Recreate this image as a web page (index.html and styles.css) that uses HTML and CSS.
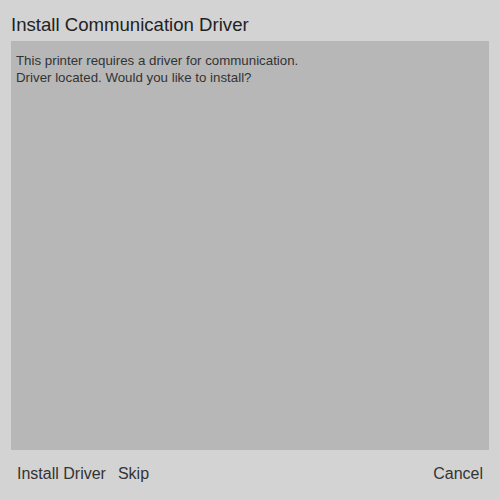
FILE: index.html
```
<!DOCTYPE html>
<html>
<head>
<meta charset="utf-8">
<link rel="stylesheet" href="styles.css">
</head>
<body>
<div class="dialog">
  <div class="title">Install Communication Driver</div>
  <div class="panel">
    <p class="msg">This printer requires a driver for communication.<br>Driver located. Would you like to install?</p>
  </div>
  <div class="actions">
    <span class="btn">Install Driver</span>
    <span class="btn">Skip</span>
    <span class="spacer"></span>
    <span class="btn">Cancel</span>
  </div>
</div>
</body>
</html>
```
FILE: styles.css
```
html, body {
  margin: 0;
  padding: 0;
  background: #d3d3d3;
}
.dialog {
  width: 500px;
  height: 500px;
  box-sizing: border-box;
  padding: 0 11px;
  display: flex;
  flex-direction: column;
  font-family: "Liberation Sans", Arial, sans-serif;
  color: #222;
}
.title {
  font-size: 18.6px;
  height: 41px;
  line-height: 22px;
  padding-top: 14px;
  box-sizing: border-box;
}
.panel {
  background: #b7b7b7;
  height: 409px;
  padding: 11px 5px;
  box-sizing: border-box;
}
.msg {
  margin: 0;
  font-size: 13.3px;
  line-height: 17px;
  color: #333;
}
.actions {
  display: flex;
  align-items: center;
  gap: 12px;
  padding: 2px 6px 0;
  height: 46px;
  box-sizing: border-box;
  font-size: 16px;
  color: #333;
}
.spacer {
  flex: 1;
}
```
